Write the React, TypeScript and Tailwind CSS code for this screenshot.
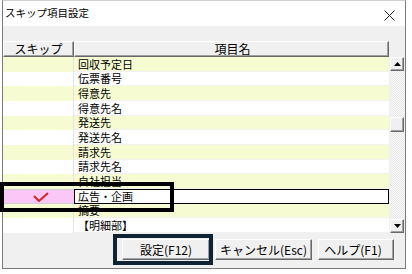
import { Fragment } from 'react';

const rows: { name: string; h: string; yellow: boolean; selected?: boolean }[] = [
  { name: '回収予定日', h: 'h-[15px]', yellow: true },
  { name: '伝票番号', h: 'h-[14px]', yellow: false },
  { name: '得意先', h: 'h-[15px]', yellow: true },
  { name: '得意先名', h: 'h-[15px]', yellow: false },
  { name: '発送先', h: 'h-[14px]', yellow: true },
  { name: '発送先名', h: 'h-[15px]', yellow: false },
  { name: '請求先', h: 'h-[15px]', yellow: true },
  { name: '請求先名', h: 'h-[14px]', yellow: false },
  { name: '自社担当', h: 'h-[15px]', yellow: true },
  { name: '広告・企画', h: 'h-[15px]', yellow: false, selected: true },
  { name: '摘要', h: 'h-[14px]', yellow: true },
  { name: '【明細部】', h: 'h-[15px]', yellow: false },
];

// raised win classic look
const raised =
  'border border-t-white border-l-white border-r-[#696969] border-b-[#696969] shadow-[inset_-1px_-1px_0_#a0a0a0]';

function ArrowButton({ up }: { up?: boolean }) {
  return (
    <div className={`h-[14px] w-[14px] bg-[#f0f0f0] flex items-center justify-center ${raised}`}>
      <svg width="7" height="4" viewBox="0 0 7 4">
        {up ? <polygon points="0,4 7,4 3.5,0" fill="#000" /> : <polygon points="0,0 7,0 3.5,4" fill="#000" />}
      </svg>
    </div>
  );
}

export default function App() {
  return (
    <div
      className="relative w-[412px] h-[274px] bg-white text-black text-[12px] leading-none"
      style={{ fontFamily: '"Noto Sans CJK JP", "Noto Sans", sans-serif' }}
    >
      {/* Window */}
      <div className="ml-[2px] w-[404px] h-[269px] flex flex-col border-l border-r border-b border-[#7a7a7a] border-t border-t-[#d0d0d0]">
        {/* Title bar */}
        <div className="h-[25px] bg-white flex items-center justify-between pl-[2px] pr-[10px]">
          <span className="text-[10.5px] text-black">スキップ項目設定</span>
          <svg width="11" height="11" viewBox="0 0 11 11" className="mt-[4px]">
            <path d="M0.5 0.5 L10.5 10.5 M10.5 0.5 L0.5 10.5" stroke="#222" strokeWidth="1" />
          </svg>
        </div>

        {/* Body */}
        <div className="flex-1 bg-[#f0f0f0] flex flex-col pt-[15px]">
          <div className="flex">
            {/* Grid */}
            <div className="w-[386px] flex flex-col">
              {/* Header */}
              <div className="flex h-[16px]">
                <div className={`w-[71px] flex items-center justify-center bg-[#f0f0f0] ${raised}`}>
                  <span className="text-[12px]">スキップ</span>
                </div>
                <div className={`flex-1 flex items-center justify-center bg-[#f0f0f0] ${raised}`}>
                  <span className="text-[12px] ml-[2px]">項目名</span>
                </div>
              </div>
              {/* Rows */}
              <div className="flex flex-col text-[11px]">
                {rows.map((r) => (
                  <div key={r.name} className={`flex ${r.h} ${r.yellow ? 'bg-[#f6fbd2]' : 'bg-white'}`}>
                    {r.selected ? (
                      <Fragment>
                        <div className="w-[71px] bg-[#fbc7f7] border-y border-[#d0d0d0] flex items-center justify-center">
                          <svg width="16" height="10" viewBox="0 0 16 10" className="ml-[4px]">
                            <path d="M1 4 L6 9 L15 1" fill="none" stroke="#d52424" strokeWidth="2" />
                          </svg>
                        </div>
                        <div className="flex-1 bg-white border border-black flex items-center pl-[3px]">
                          <span>{r.name}</span>
                        </div>
                      </Fragment>
                    ) : (
                      <Fragment>
                        <div className="w-[71px] border-r border-[#e4e4e4]" />
                        <div className="flex-1 flex items-center pl-[4px] border-b border-[#f2f2f2]">
                          <span>{r.name}</span>
                        </div>
                      </Fragment>
                    )}
                  </div>
                ))}
              </div>
            </div>

            {/* Scrollbar */}
            <div className="ml-[1px] w-[14px] flex flex-col pt-[16px]">
              <div className="h-[176px] flex flex-col bg-[repeating-conic-gradient(#e6e6e6_0_25%,#fbfbfb_0_50%)] bg-[length:2px_2px]">
                <ArrowButton up />
                <div className="h-[46px]" />
                <div className={`h-[15px] bg-[#f0f0f0] ${raised}`} />
                <div className="flex-1" />
                <ArrowButton />
              </div>
            </div>
          </div>

          {/* Buttons */}
          <div className="flex pt-[6px] pl-[119px] gap-[4px]">
            <button className={`w-[88px] h-[21px] bg-[#f0f0f0] text-[12px] ${raised}`}>設定(F12)</button>
            <button className={`w-[97px] h-[21px] bg-[#f0f0f0] text-[12px] ml-[1px] ${raised}`}>キャンセル(Esc)</button>
            <button className={`w-[76px] h-[21px] bg-[#f0f0f0] text-[12px] ml-[2px] pr-[6px] ${raised}`}>ヘルプ(F1)</button>
          </div>
        </div>
      </div>

      {/* Annotation boxes */}
      <div className="absolute left-[0px] top-[182px] w-[174px] h-[30px] border-[4px] border-black" />
      <div className="absolute left-[113px] top-[234px] w-[100px] h-[31px] border-[4px] border-[#0e2435]" />
    </div>
  );
}
